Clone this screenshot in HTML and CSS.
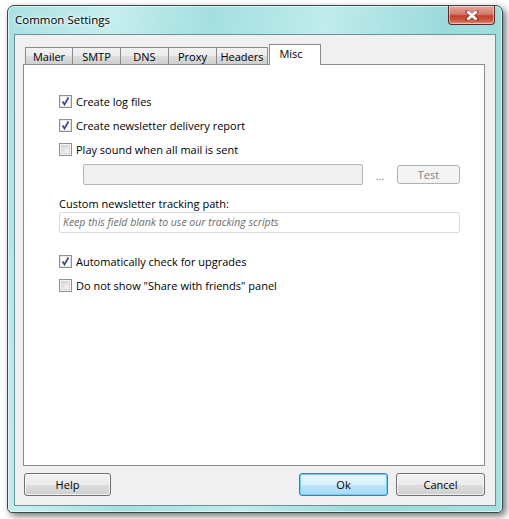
FILE: index.html
```html
<!DOCTYPE html>
<html>
<head>
<meta charset="utf-8">
<link rel="stylesheet" href="styles.css">
</head>
<body>
<div class="window">
  <div class="titlebar">
    <span class="title">Common Settings</span>
    <div class="close">
      <svg width="14" height="11" viewBox="0 0 14 11"><path d="M2 1.5 L12 9.5 M12 1.5 L2 9.5" stroke="#3a2a2a" stroke-width="4" stroke-linecap="square" opacity="0.35"/><path d="M2.5 1.5 L11.5 9.5 M11.5 1.5 L2.5 9.5" stroke="#fff" stroke-width="2.6"/></svg>
    </div>
  </div>
  <div class="client">
    <div class="tabs">
      <div class="tab w48">Mailer</div>
      <div class="tab w48">SMTP</div>
      <div class="tab w48">DNS</div>
      <div class="tab w48">Proxy</div>
      <div class="tab w52">Headers</div>
      <div class="tab sel">Misc</div>
    </div>
    <div class="panel">
      <label class="row"><span class="cb on"></span>Create log files</label>
      <label class="row"><span class="cb on"></span>Create newsletter delivery report</label>
      <label class="row"><span class="cb"></span>Play sound when all mail is sent</label>
      <div class="soundrow">
        <div class="field disabled"></div>
        <span class="dots">...</span>
        <div class="btn test">Test</div>
      </div>
      <div class="lbl">Custom newsletter tracking path:</div>
      <div class="field track">Keep this field blank to use our tracking scripts</div>
      <label class="row first2"><span class="cb on"></span>Automatically check for upgrades</label>
      <label class="row"><span class="cb"></span>Do not show "Share with friends" panel</label>
    </div>
    <div class="buttons">
      <div class="btn help">Help</div>
      <div class="spacer"></div>
      <div class="btn ok">Ok</div>
      <div class="btn cancel">Cancel</div>
    </div>
  </div>
</div>
</body>
</html>
```

FILE: styles.css
```css
* { box-sizing: border-box; }
html, body { margin: 0; }
body {
  width: 509px;
  height: 519px;
  background: #ffffff;
  padding: 5px 0 0 7px;
  font-family: "Open Sans", "Noto Sans", sans-serif;
  font-size: 11px;
  color: #000;
  overflow: hidden;
}
.window {
  width: 496px;
  height: 508px;
  border: 1px solid #37494c;
  border-radius: 7px 7px 5px 5px;
  background: linear-gradient(100deg, #a9e0e2 0%, #c6eeee 18%, #a4dfe0 35%, #c0ecec 55%, #9cdadc 75%, #a8e0e1 100%);
  box-shadow: 3px 3px 7px rgba(0,0,0,0.55), inset 0 0 0 1px rgba(255,255,255,0.55);
  padding: 0 6px 6px 6px;
  display: flex;
  flex-direction: column;
}
.titlebar {
  height: 28px;
  display: flex;
  justify-content: space-between;
  align-items: flex-start;
}
.title {
  padding: 6px 0 0 1px;
  font-size: 11.5px;
  line-height: 16px;
  color: #000;
  text-shadow: 0 0 6px #fff, 0 0 3px #fff;
}
.close {
  width: 47px;
  height: 19px;
  margin-right: 1px;
  border: 1px solid #5a2a26;
  border-top: none;
  border-radius: 0 0 4px 4px;
  background: linear-gradient(#e8a59a 0%, #d47a6c 45%, #c0402c 55%, #d0604a 85%, #e59a86 100%);
  box-shadow: inset 0 0 0 1px rgba(255,255,255,0.45);
  display: flex;
  align-items: center;
  justify-content: center;
}
.client {
  flex: 1;
  border: 1px solid #6b9397;
  background: #f0f0f0;
  padding: 9px 10px 9px 8px;
  display: flex;
  flex-direction: column;
}
.tabs {
  height: 21px;
  display: flex;
  align-items: flex-end;
  padding-left: 2px;
  border-bottom: 1px solid #898c95;
}
.tab {
  height: 17px;
  border: 1px solid #898c95;
  border-bottom: none;
  border-left-width: 0;
  background: linear-gradient(#f2f2f2 0%, #ebebeb 50%, #dddddd 51%, #cfcfcf 100%);
  display: flex;
  align-items: center;
  justify-content: center;
  font-size: 11px;
  line-height: 14px;
  padding-top: 2px;
}
.tab:first-child { border-left-width: 1px; }
.w48 { width: 48px; }
.w52 { width: 51px; }
.tab.sel {
  width: 52px;
  height: 21px;
  margin-bottom: -1px;
  margin-left: 1px;
  border-left-width: 1px;
  background: #fff;
  padding-top: 0;
  padding-bottom: 3px;
  padding-right: 8px;
}
.panel {
  flex: 1;
  background: #fff;
  border: 1px solid #898c95;
  border-top: none;
  padding: 24px 0 0 35px;
  display: flex;
  flex-direction: column;
}
.row {
  height: 24px;
  display: flex;
  align-items: center;
  gap: 4px;
}
.cb {
  width: 13px;
  height: 13px;
  border: 1px solid #8f8f8f;
  box-shadow: inset 0 0 0 1px #f4f4f4, inset 0 0 0 2px #d6d6d6;
  flex: none;
  background-color: #fff;
  background-image: linear-gradient(135deg, #d4d4d4, #f8f8f8);
  background-size: 7px 7px;
  background-position: 2px 2px;
  background-repeat: no-repeat;
}
.cb.on {
  background: #fff url("data:image/svg+xml;utf8,<svg xmlns='http://www.w3.org/2000/svg' width='11' height='11'><path d='M2.5 5.5 L4.5 8.5 L8.5 1.5' fill='none' stroke='%23404f8e' stroke-width='1.8'/></svg>") no-repeat 0 0;
  box-shadow: inset 0 0 0 1px #e8e8e8;
}
.soundrow {
  display: flex;
  align-items: center;
  margin-top: 3px;
  padding-left: 24px;
  height: 21px;
}
.field {
  height: 21px;
  border: 1px solid #afafaf;
  border-radius: 2px;
}
.field.disabled {
  width: 280px;
  background: #f0f0f0;
  border-color: #b5b5b5;
}
.dots {
  width: 34px;
  text-align: center;
  color: #8a8a8a;
  font-size: 11px;
  padding-top: 2px;
}
.btn {
  height: 23px;
  border: 1px solid #707070;
  border-radius: 3px;
  background: linear-gradient(#f2f2f2 0%, #ebebeb 50%, #dddddd 51%, #cfcfcf 100%);
  box-shadow: inset 0 0 0 1px rgba(255,255,255,0.7);
  display: flex;
  align-items: center;
  justify-content: center;
  font-size: 11px;
}
.btn.test {
  width: 63px;
  height: 19px;
  border-color: #adb2b5;
  background: #f4f4f4;
  box-shadow: none;
  color: #838383;
}
.lbl {
  margin-top: 11px;
  height: 16px;
  line-height: 16px;
}
.field.track {
  width: 401px;
  background: #fff;
  border-color: #dcdcdc;
  color: #6d6d6d;
  font-style: italic;
  font-size: 10.5px;
  line-height: 19px;
  padding-left: 3px;
}
.row.first2 { margin-top: 16px; }
.buttons {
  margin-top: 7px;
  display: flex;
  padding-left: 1px;
}
.spacer { flex: 1; }
.btn.help { width: 87px; }
.btn.ok {
  width: 89px;
  border-color: #3c7fb1;
  background: linear-gradient(#eaf6fd 0%, #d9f0fc 50%, #bee6fd 51%, #a7d9f5 100%);
  box-shadow: inset 0 0 0 1px #6fd0f5;
}
.btn.cancel { width: 89px; margin-left: 8px; }
```
